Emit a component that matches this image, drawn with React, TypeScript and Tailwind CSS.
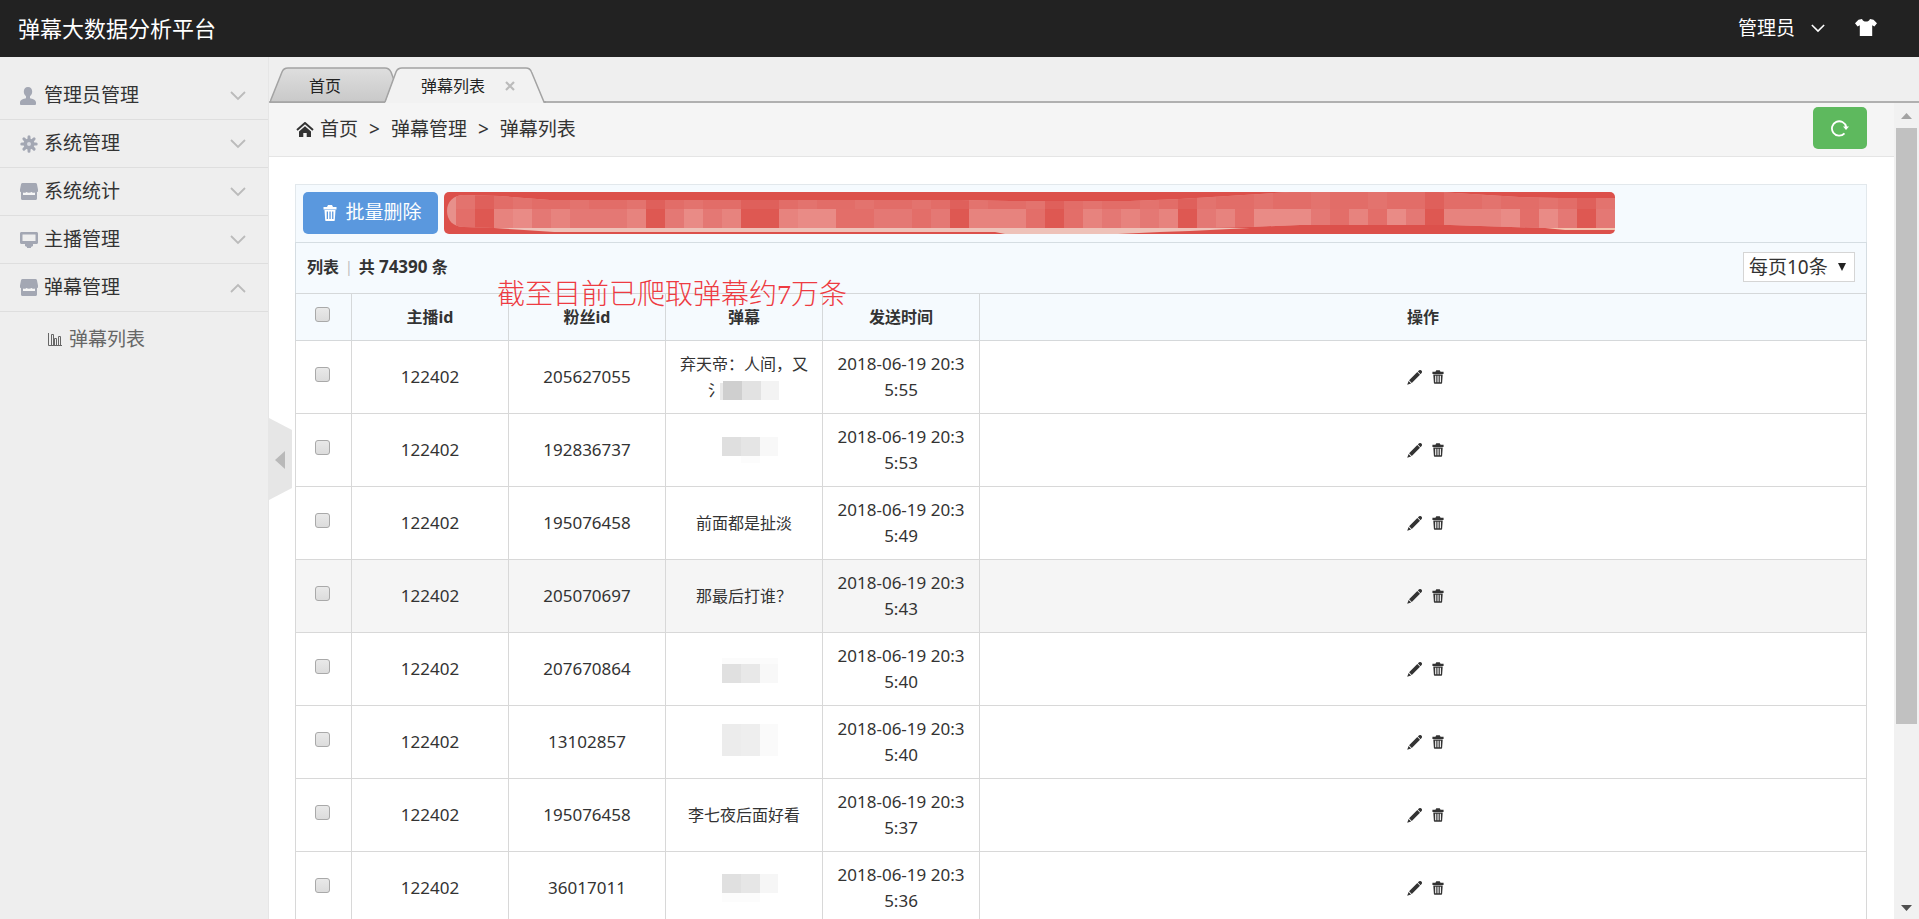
import type { ReactNode } from "react";

type Block = [x: number, y: number, w: number, h: number, fill: string];

const MENU = [
  { label: "管理员管理", icon: <UserIcon /> },
  { label: "系统管理", icon: <GearIcon /> },
  { label: "系统统计", icon: <ShopIcon /> },
  { label: "主播管理", icon: <ScreenIcon /> },
  { label: "弹幕管理", icon: <ShopIcon />, open: true },
];

const ROWS: { fan: string; text: ReactNode; time: string; active?: boolean }[] = [
  {
    fan: "205627055",
    text: (
      <>
        弃天帝：人间，又
        <span className="flex items-center justify-center">
          氵
          <Mosaic
            className="-ml-1 h-5 w-[60px]"
            viewBox="0 0 60 20"
            blocks={[
              [0, 3, 3, 17, "#e9e9e9"],
              [3, 1, 19, 19, "#cfcfcf"],
              [22, 1, 19, 19, "#e2e2e2"],
              [41, 1, 18, 19, "#f3f3f3"],
            ]}
          />
        </span>
      </>
    ),
    time: "5:55",
  },
  {
    fan: "192836737",
    text: (
      <Mosaic
        blocks={[
          [8, 13, 19, 19, "#dfdfdf"],
          [27, 13, 19, 19, "#e5e5e5"],
          [46, 13, 18, 19, "#f8f8f8"],
          [27, 32, 19, 7, "#fcfcfc"],
        ]}
      />
    ),
    time: "5:53",
  },
  { fan: "195076458", text: "前面都是扯淡", time: "5:49" },
  { fan: "205070697", text: "那最后打谁？", time: "5:43", active: true },
  {
    fan: "207670864",
    text: (
      <Mosaic
        blocks={[
          [8, 15, 56, 7, "#fbfbfb"],
          [8, 21, 19, 19, "#e0e0e0"],
          [27, 21, 19, 19, "#e8e8e8"],
          [46, 21, 18, 19, "#f8f8f8"],
        ]}
      />
    ),
    time: "5:40",
  },
  {
    fan: "13102857",
    text: (
      <Mosaic
        blocks={[
          [8, 8, 19, 32, "#ececec"],
          [27, 8, 19, 32, "#eeeeee"],
          [46, 8, 18, 32, "#fafafa"],
        ]}
      />
    ),
    time: "5:40",
  },
  { fan: "195076458", text: "李七夜后面好看", time: "5:37" },
  {
    fan: "36017011",
    text: (
      <Mosaic
        blocks={[
          [8, 12, 19, 19, "#e0e0e0"],
          [27, 12, 19, 19, "#e6e6e6"],
          [46, 12, 18, 19, "#f6f6f6"],
          [8, 31, 38, 9, "#fcfcfc"],
        ]}
      />
    ),
    time: "5:36",
  },
];

// one letter per 19px block, from dark to light: d, m, n, l, L
const BAR_CELLS = "mdlLnlnnnldnLnlddlLLmmnnmndlllmdmlnlnldnlmLLLnmlmLndlllLmLndn";
const BAR_COLORS: Record<string, string> = {
  d: "#de5852",
  m: "#e36e69",
  n: "#e47874",
  l: "#e7837e",
  L: "#e98b86",
};

function UserIcon() {
  return (
    <svg viewBox="0 0 16 18" className="h-[18px] w-4" fill="currentColor">
      <path d="M8 0C5.400 0 3.800 1.900 3.800 4.600c0 2 .9 3.600 2.200 4.700v1.900C3.800 11.800 0 12.600 0 15.400V16.800C0 17.600.5 18 1.200 18h13.600c.7 0 1.200-.4 1.200-1.200v-1.400c0-2.800-3.800-3.600-6-4.200V9.300c1.300-1.100 2.200-2.700 2.200-4.700C12.200 1.900 10.600 0 8 0z" />
    </svg>
  );
}

function GearIcon() {
  return (
    <svg viewBox="0 0 18 18" className="h-[18px] w-[18px]">
      <g stroke="currentColor" strokeWidth="3" strokeLinecap="round">
        <path d="M9 1.800v14.400M1.800 9h14.400M3.900 3.900l10.200 10.200M14.100 3.900L3.900 14.100" />
      </g>
      <circle cx="9" cy="9" r="5.500" fill="currentColor" />
      <circle cx="9" cy="9" r="2" fill="#d9dbe2" />
    </svg>
  );
}

function ShopIcon() {
  return (
    <svg viewBox="0 0 18 17" className="h-[17px] w-[18px]" fill="currentColor">
      <path d="M2.500 0h13c.7 0 1.200.4 1.400 1L18 6.500V8c0 .6-.4 1-1 1v6.500c0 .9-.6 1.500-1.500 1.500h-13C1.600 17 1 16.400 1 15.500V9c-.6 0-1-.4-1-1V6.500L1.100 1c.2-.6.700-1 1.400-1z" />
      <path d="M3 12V9.600c1.300.5 2.500.3 3.300-.6 1.500 1.100 3.800 1.100 5.400 0 .8.9 2 1.100 3.300.6V12z" fill="#f6f6f6" />
    </svg>
  );
}

function ScreenIcon() {
  return (
    <svg viewBox="0 0 18 16" className="h-4 w-[18px]" fill="currentColor">
      <path fillRule="evenodd" d="M1.500 0h15c.9 0 1.500.6 1.500 1.500v9c0 .9-.6 1.500-1.500 1.500h-15C.6 12 0 11.400 0 10.500v-9C0 .6.600 0 1.500 0zM2.500 2.500v6.500h13V2.500z" />
      <path d="M5 12h8v2l-2 1v1H7v-1l-2-1z" />
    </svg>
  );
}

function BarsIcon() {
  return (
    <svg viewBox="0 0 14 13" className="h-[13px] w-[14px]" fill="none" stroke="currentColor">
      <path d="M.5 0v12.500H14M3.500 12V1.500h2V12M6.500 12V5.500h2V12M10.500 12V3.500h2V12" />
    </svg>
  );
}

function TrashIcon({ className }: { className: string }) {
  return (
    <svg viewBox="0 0 14 16" className={className} fill="currentColor">
      <path d="M5 0h4l1 2h3.500v2.500H.5V2H4z" />
      <path fillRule="evenodd" d="M1.500 5h11l-.7 10c0 .6-.4 1-1 1H3.200c-.6 0-1-.4-1-1zM3.700 6.500V14h1.300V6.500zM6.400 6.500V14h1.300V6.500zM9.100 6.500V14h1.300V6.500z" />
    </svg>
  );
}

function PencilIcon() {
  return (
    <svg viewBox="0 0 15 15" className="h-[15px] w-[15px]" fill="currentColor">
      <path d="M11.800.6a1.700 1.700 0 0 1 2.600 2.600l-.9 1L10.900 1.500zM10.300 2.100l2.700 2.700-8.200 8.200-2.700-2.700zM1.600 11l2.500 2.500L.2 14.800z" />
    </svg>
  );
}

function HomeIcon() {
  return (
    <svg viewBox="0 0 18 15" className="h-[15px] w-[18px]">
      <path d="M1 8L9 1l8 7" fill="none" stroke="#333" strokeWidth="2" />
      <path d="M9 4.200l6 5.300V15h-4.300v-4H7.300v4H3V9.500z" fill="#333" />
    </svg>
  );
}

function Chevron({ up, className }: { up?: boolean; className: string }) {
  return (
    <svg viewBox="0 0 16 10" className={className} fill="none" stroke="currentColor" strokeWidth="1.800">
      <path d={up ? "M1 9l7-7 7 7" : "M1 1l7 7 7-7"} />
    </svg>
  );
}

function Mosaic({
  blocks,
  viewBox = "0 0 60 52",
  className = "mx-auto block h-[52px] w-[60px] overflow-visible",
}: {
  blocks: Block[];
  viewBox?: string;
  className?: string;
}) {
  return (
    <svg viewBox={viewBox} className={className}>
      {blocks.map(([x, y, w, h, fill], i) => (
        <rect key={i} x={x} y={y} width={w} height={h} fill={fill} />
      ))}
    </svg>
  );
}

function RedBar() {
  return (
    <svg viewBox="0 0 1171 42" className="h-[42px] w-[1171px]">
      <defs>
        <clipPath id="brush">
          <path d="M20 3C9 3 3 10 3 19s6 16 17 16l30 1h700l56-1 50-2h150l95 3h80V6h-66l-40-1-80-5H846L736 7l-50 2H566l-50-1H106L56 4z" />
        </clipPath>
      </defs>
      <rect width="1171" height="42" rx="5" fill="#dc504b" />
      <g clipPath="url(#brush)">
        <rect width="1171" height="42" fill="#e7908b" />
        {BAR_CELLS.split("").map((c, i) => (
          <g key={i}>
            <rect x={12 + i * 19} y="0" width="19" height="17" fill={c === "d" ? "#df605b" : i % 3 ? "#e26d68" : "#e3736e"} />
            <rect x={12 + i * 19} y="17" width="19" height="25" fill={BAR_COLORS[c]} />
          </g>
        ))}
      </g>
      <path d="M50 36h756l-60 3-30 1-42 2H561l-10-2H110l-30-2z" fill="#eec2b9" />
      <path d="M1101 36h70v2h-50z" fill="#f3c3ae" />
    </svg>
  );
}

function TickBox({ label }: { label: string }) {
  return (
    <input
      type="checkbox"
      aria-label={label}
      className="mr-[3px] mb-2 h-[15px] w-[15px] appearance-none rounded-[3px] border border-[#a9a9a9] bg-linear-to-b from-[#e9e9e9] to-[#dcdcdc] align-middle"
    />
  );
}

function Sidebar() {
  return (
    <nav className="w-[269px] shrink-0 border-r border-[#e6e6e6] bg-[#eee] pt-[15px]">
      {MENU.map((item) => (
        <button
          key={item.label}
          className="flex h-12 w-full items-center border-b border-[#dedede] pr-[22px] pl-5 text-[19px] text-[#333]"
        >
          <span className="w-6 text-[#a3a7b3]">{item.icon}</span>
          {item.label}
          <Chevron up={item.open} className="ml-auto h-[10px] w-4 text-[#bbb]" />
        </button>
      ))}
      <a href="#" className="flex h-[54px] items-center gap-[7px] pl-12 text-[19px] text-[#666]">
        <BarsIcon />
        弹幕列表
      </a>
    </nav>
  );
}

function Tabs() {
  return (
    <div className="relative h-[46px] shrink-0 border-b-2 border-[#b0b0b0] bg-[#efefef]">
      <svg viewBox="0 0 276 36" className="absolute top-[10px] left-px h-9 w-[276px]">
        <defs>
          <linearGradient id="tab" x1="0" y1="0" x2="0" y2="1">
            <stop offset="0" stopColor="#dedede" />
            <stop offset="1" stopColor="#c9c9c9" />
          </linearGradient>
        </defs>
        <path d="M0 35L12 5q1.500-4 6-4h97q4 0 6 4l3 8-8 22z" fill="url(#tab)" stroke="#a3a3a3" strokeWidth="1.500" />
        <path d="M115 36L126 5q1.500-4 6-4h124q4 0 5.500 4L274 36z" fill="#f2f2f2" />
        <path d="M115 35L126 5q1.500-4 6-4h124q4 0 5.500 4L274 35h2" fill="none" stroke="#a3a3a3" strokeWidth="1.500" />
      </svg>
      <div className="relative flex h-full items-center pt-[14px] pl-10 text-base text-[#222]">
        <a href="#" className="w-28">首页</a>
        <a href="#">弹幕列表</a>
        <button aria-label="关闭" className="ml-5 text-[#bbb]">
          <svg viewBox="0 0 10 10" className="h-[10px] w-[10px]" stroke="currentColor" strokeWidth="2.200">
            <path d="M1 1l8 8M9 1L1 9" />
          </svg>
        </button>
      </div>
    </div>
  );
}

function Breadcrumb() {
  return (
    <div className="flex h-[54px] items-center border-b border-[#e5e5e5] bg-[#f5f5f5] px-[27px] text-[19px] text-[#333]">
      <HomeIcon />
      <a href="#" className="ml-[6px]">首页</a>
      <span className="mx-[11px]">&gt;</span>
      <span>弹幕管理</span>
      <span className="mx-[11px]">&gt;</span>
      <span>弹幕列表</span>
      <button aria-label="刷新" className="mb-1 ml-auto flex h-[42px] w-[54px] items-center justify-center rounded-[5px] bg-[#5eb95e]">
        <svg viewBox="0 0 18 18" className="h-[18px] w-[18px]" fill="none" stroke="#fff" strokeWidth="1.800">
          <path d="M13.500 14.300A7.200 7.200 0 1 1 15.200 8" />
          <path d="M12 7.500h6l-3 3.500z" fill="#fff" stroke="none" />
        </svg>
      </button>
    </div>
  );
}

function DanmuTable() {
  return (
    <table className="w-full table-fixed border-collapse text-center text-base leading-[26px] text-[#333]">
      <colgroup>
        <col className="w-14" />
        <col className="w-[157px]" />
        <col className="w-[157px]" />
        <col className="w-[157px]" />
        <col className="w-[157px]" />
        <col />
      </colgroup>
      <thead className="bg-[#f5fafe]">
        <tr className="h-[47px] [&>th]:border [&>th]:border-[#d5d8da]">
          <th><TickBox label="全选" /></th>
          <th>主播id</th>
          <th>粉丝id</th>
          <th>弹幕</th>
          <th>发送时间</th>
          <th>操作</th>
        </tr>
      </thead>
      <tbody>
        {ROWS.map((row, i) => (
          <tr
            key={i}
            className={`h-[73px] [&>td]:border [&>td]:border-[#d8d8d8] ${row.active ? "bg-[#f5f5f5]" : "bg-white"}`}
          >
            <td><TickBox label={row.fan} /></td>
            <td className="text-[17px]">122402</td>
            <td className="text-[17px]">{row.fan}</td>
            <td>{row.text}</td>
            <td className="text-[17px]">
              2018-06-19 20:3
              <br />
              {row.time}
            </td>
            <td>
              <div className="flex items-center justify-center gap-[10px] pl-1 text-[#333]">
                <a href="#" aria-label="编辑"><PencilIcon /></a>
                <a href="#" aria-label="删除"><TrashIcon className="h-[14px] w-3" /></a>
              </div>
            </td>
          </tr>
        ))}
      </tbody>
    </table>
  );
}

export default function App() {
  return (
    <div className="flex h-screen flex-col overflow-hidden bg-white font-['Noto_Sans','Noto_Sans_CJK_SC',sans-serif]">
      <header className="flex h-[57px] shrink-0 items-center bg-[#222] pr-[42px] pl-[18px] text-white">
        <h1 className="text-[22px]">弹幕大数据分析平台</h1>
        <button className="ml-auto flex items-center gap-4 text-[19px]">
          管理员
          <Chevron className="h-[9px] w-[14px]" />
        </button>
        <button aria-label="换肤" className="mb-[3px] ml-[30px]">
          <svg viewBox="0 0 22 17" className="h-[17px] w-[22px]" fill="currentColor">
            <path d="M7 0c.8 1.800 2.200 2.600 4 2.600S14.200 1.800 15 0l3.500.8L22 4.200l-2.600 3.300-2.200-1.300V17H4.800V6.200L2.600 7.500 0 4.200 3.500.8z" />
          </svg>
        </button>
      </header>

      <div className="flex min-h-0 flex-1">
        <Sidebar />
        <div className="relative flex min-w-0 flex-1 flex-col">
          <Tabs />
          <div className="flex min-h-0 flex-1">
            <main className="min-w-0 flex-1 overflow-hidden">
              <Breadcrumb />
              <div className="mt-[27px] mr-[27px] ml-[26px]">
                <div className="flex h-[58px] items-center gap-[6px] border border-b-0 border-[#e2e8ec] bg-[#f5fafe] pb-[2px] pl-[7px]">
                  <button className="flex h-[42px] w-[135px] shrink-0 items-center justify-center gap-2 rounded-[5px] bg-[#5a98de] pl-1 text-[19px] text-white">
                    <TrashIcon className="h-4 w-[14px]" />
                    批量删除
                  </button>
                  <RedBar />
                </div>
                <div className="relative flex h-[51px] items-center border border-b-0 border-[#d5dde2] bg-[#f5fafe] pr-[11px] pb-[2px] pl-[11px] font-bold text-[#333]">
                  <span>列表</span>
                  <span className="mx-[6px] text-sm font-normal text-[#bbb]">|</span>
                  <span>
                    共 <span className="text-[17px]">74390</span> 条
                  </span>
                  <select
                    aria-label="每页条数"
                    className="ml-auto h-[30px] w-28 appearance-none border border-[#d5d5d5] bg-white pl-[5px] text-[19px] leading-7 font-normal"
                  >
                    <option>每页10条</option>
                  </select>
                  <svg viewBox="0 0 8 8" className="pointer-events-none absolute right-5 h-2 w-2">
                    <path d="M0 0h8L4 8z" fill="#222" />
                  </svg>
                  <p className="absolute top-8 left-[201px] z-10 font-['Liberation_Serif','Noto_Sans_CJK_SC',serif] text-[28px] leading-10 font-light whitespace-nowrap text-[#ee3b42]">
                    截至目前已爬取弹幕约7万条
                  </p>
                </div>
                <DanmuTable />
              </div>
            </main>
            <div className="flex w-[25px] shrink-0 flex-col items-center bg-[#f1f1f1]">
              <svg viewBox="0 0 11 6" className="mt-[10px] mb-[9px] h-[6px] w-[11px] shrink-0">
                <path d="M0 6h11L5.500 0z" fill="#a3a3a3" />
              </svg>
              <div className="h-[596px] w-[21px] bg-[#c1c1c1]" />
              <svg viewBox="0 0 11 6" className="mt-auto mb-2 h-[6px] w-[11px] shrink-0">
                <path d="M0 0h11L5.500 6z" fill="#505050" />
              </svg>
            </div>
          </div>
          <button aria-label="收起菜单" className="absolute top-[361px] left-0">
            <svg viewBox="0 0 24 82" className="h-[82px] w-6">
              <path d="M0 0l23 12v58L0 82z" fill="#e6e6e6" />
              <path d="M6 42l10-9v18z" fill="#b9b9b9" />
            </svg>
          </button>
        </div>
      </div>
    </div>
  );
}
